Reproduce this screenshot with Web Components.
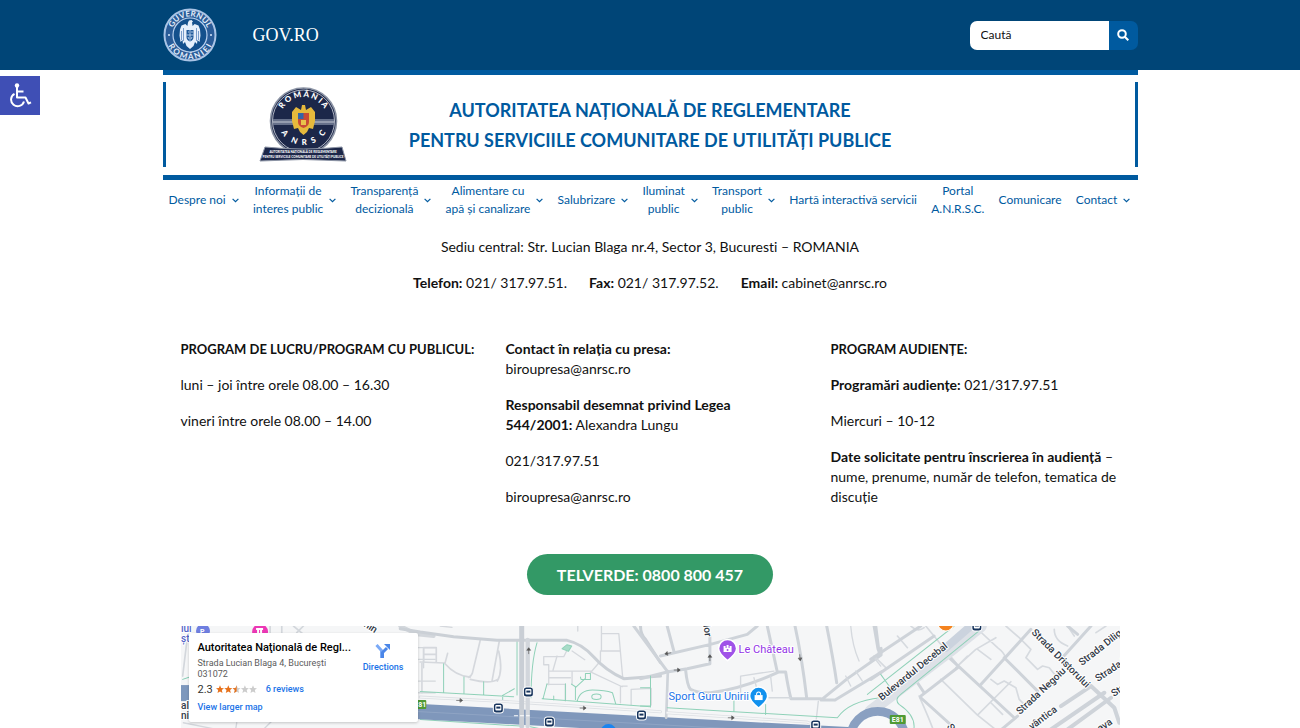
<!DOCTYPE html>
<html lang="ro">
<head>
<meta charset="utf-8">
<title>Contact – ANRSC</title>
<style>
  html, body { margin: 0; }
  body {
    min-height: 100vh; background: #fff; color: #111;
    font: 14px/20px Lato, "Open Sans", sans-serif;
    font-variant-ligatures: none;
    --navy: #004577; --blue: #005a9f;
  }
</style>
</head>
<body>
<anrsc-page></anrsc-page>

<script>
const define = (name, html) => {
  const tpl = document.createElement('template');
  tpl.innerHTML = html;
  customElements.define(name, class extends HTMLElement {
    constructor() {
      super();
      this.attachShadow({ mode: 'open' }).append(tpl.content.cloneNode(true));
    }
  });
};

/* Government seal */
define('gov-seal', `
<style>:host{display:block} svg{display:block;width:54px;height:54px}</style>
<svg viewBox="0 0 54 54" role="img" aria-label="Guvernul României">
  <defs>
    <path id="t" d="M8.500 27a18.500 18.500 0 0 1 37 0"/>
    <path id="b" d="M2.800 27a24.200 24.200 0 0 0 48.400 0"/>
  </defs>
  <circle cx="27" cy="27" r="25.500" fill="#2a5c98" stroke="#a9c4e6" stroke-width="2"/>
  <circle cx="27" cy="27" r="17" fill="#14508c" stroke="#b9d0ee" stroke-width="1.200"/>
  <g fill="#e6effb">
    <path d="M26 12.500l2.500-.5 1.500 1.500-1 1 .6 3.500 2-2 3.900 1.500 1.500 4 .5 6-1 6.500-2-2-.5 4-2-2-1.500 4-3.500 3-3.500-3-1.500-4-2 2-.5-4-2 2-1-6.500.5-6 1.500-4 3.900-1.500 2 2 .6-3.500z"/>
  </g>
  <path d="M20.500 20v13M18.500 23v9M33.500 20v13M35.500 23v9" stroke="#4a7ab5" stroke-width=".7"/>
  <path d="M23.500 22h7v7q0 3-3.500 4.500-3.500-1.500-3.500-4.500z" fill="#1f5a9a"/>
  <path d="M27 22v11M23.500 27h7M25 24h1M28 24h2M25 29l1 2M29 29l-1 2" stroke="#cfe0f6" stroke-width=".8"/>
  <g fill="#e6effb" font-family="Lato, sans-serif" font-size="8" font-weight="700" text-anchor="middle">
    <text><textPath href="#t" startOffset="50%">GUVERNUL</textPath></text>
    <text><textPath href="#b" startOffset="50%">R O M Â N I E I</textPath></text>
  </g>
  <circle cx="6" cy="27" r="1" fill="#d9e7fa"/><circle cx="48" cy="27" r="1" fill="#d9e7fa"/>
</svg>`);

/* ANRSC emblem */
define('anrsc-emblem', `
<style>:host{display:block} svg{display:block;width:88px;height:76px}</style>
<svg viewBox="0 0 88 76" role="img" aria-label="ANRSC">
  <defs>
    <path id="t" d="M20.500 34a24 24 0 0 1 48 0"/>
    <path id="b" d="M18.500 32a26 26 0 0 0 52 0"/>
  </defs>
  <circle cx="44.500" cy="34" r="33" fill="#1c2749" stroke="#8c94a5" stroke-width="1.600"/>
  <circle cx="44.500" cy="34" r="31" fill="none" stroke="#d5d9e2" stroke-width=".8"/>
  <path d="M14 32h61v6H14z" fill="#66708a"/><path d="M14 35h61" stroke="#c3c8d3"/>
  <path d="M43 18l3 0 1 5 5-3 4 5 0 9-2 8-4-1-2 4-3.500 3-3.500-3-2-4-4 1-2-8 0-9 4-5 5 3z" fill="#e6b93c"/>
  <path d="M39 26h11v9q0 4-5.500 6-5.500-2-5.500-6z" fill="#c94a35"/>
  <path d="M39 26h5.500v6H39z" fill="#3565a8"/><path d="M42 33h5v5h-5z" fill="#e9c24b"/>
  <g fill="#fff" font-family="Lato, sans-serif" font-weight="900" text-anchor="middle">
    <text font-size="8"><textPath href="#t" startOffset="50%">R O M Â N I A</textPath></text>
    <text font-size="8"><textPath href="#b" startOffset="50%">A&#160;&#160;&#160; N&#160;&#160; R&#160;&#160; S&#160;&#160;&#160; C</textPath></text>
  </g>
  <path d="M6 60q38 4 77 0l4 14q-43-3-86 0z" fill="#1c2749" stroke="#8c94a5"/>
  <g fill="#fff" font-family="Lato, sans-serif" font-weight="900" text-anchor="middle" font-size="3">
    <text x="44" y="66">AUTORITATEA NAȚIONALĂ DE REGLEMENTARE</text>
    <text x="44" y="71">PENTRU SERVICIILE COMUNITARE DE UTILITĂȚI PUBLICE</text>
  </g>
</svg>`);

/* Top bar with search */
define('top-bar', `
<style>
  :host{display:block;background:var(--navy)}
  .in{width:75%;margin:0 auto;height:70px;display:flex;align-items:center}
  a{margin-left:36px;color:#fff;text-decoration:none;font:18px/24px "Liberation Serif",serif}
  form{margin-left:auto;display:flex;width:168px;height:29px;border-radius:7px;overflow:hidden}
  input{flex:1;min-width:0;border:0;padding:0 11px;background:#fff;font:12px/20px Lato,sans-serif;color:#000}
  input::placeholder{color:#111;opacity:1}
  button{width:29px;border:0;padding:0;background:var(--blue);display:grid;place-items:center}
</style>
<div class="in">
  <gov-seal></gov-seal>
  <a href="#gov">GOV.RO</a>
  <form role="search">
    <input type="search" placeholder="Caută" aria-label="Caută">
    <button type="button" aria-label="Caută"><svg width="12" height="12" viewBox="0 0 12 12" fill="none" stroke="#fff" stroke-width="2"><circle cx="5" cy="5" r="3.800"/><path d="M7.800 7.800L11.300 11.300"/></svg></button>
  </form>
</div>`);

/* Institution banner */
define('site-banner', `
<style>
  :host{display:block;border:solid var(--blue);border-width:5px 0;padding:7px 0 8px}
  .in{display:grid;grid-template-columns:1fr 2fr 1fr;align-items:center;height:85px;box-sizing:border-box;border:solid var(--blue);border-width:0 3px}
  anrsc-emblem{justify-self:center;padding-left:32px}
  h1{margin:0;text-align:center;white-space:nowrap;font:700 18px/30px "Trebuchet MS",Lato,sans-serif;color:var(--blue)}
</style>
<div class="in">
  <anrsc-emblem></anrsc-emblem>
  <h1>AUTORITATEA NAȚIONALĂ DE REGLEMENTARE<br>PENTRU SERVICIILE COMUNITARE DE UTILITĂȚI PUBLICE</h1>
</div>`);

/* Menu entry; "sub" adds the drop-down chevron */
define('menu-item', `
<style>
  :host{display:block}
  a{display:flex;align-items:center;gap:6px;color:var(--blue);text-decoration:none;text-align:center;white-space:nowrap;font:12px/18px Lato,sans-serif}
  svg{display:none}
  :host([sub]) svg{display:block}
</style>
<a href="#menu"><span><slot></slot></span><svg width="7" height="5" viewBox="0 0 7 5" fill="none" stroke="currentColor" stroke-width="1.200"><path d="M.6.8L3.500 3.700 6.400.8"/></svg></a>`);

define('main-menu', `
<style>
  :host{display:block}
  nav{display:flex;justify-content:space-between;align-items:center;height:36px;padding:2px 7px 0 6px}
</style>
<nav aria-label="Meniu principal">
  <menu-item sub>Despre noi</menu-item>
  <menu-item sub>Informații de<br>interes public</menu-item>
  <menu-item sub>Transparență<br>decizională</menu-item>
  <menu-item sub>Alimentare cu<br>apă și canalizare</menu-item>
  <menu-item sub>Salubrizare</menu-item>
  <menu-item sub>Iluminat<br>public</menu-item>
  <menu-item sub>Transport<br>public</menu-item>
  <menu-item>Hartă interactivă servicii</menu-item>
  <menu-item>Portal<br>A.N.R.S.C.</menu-item>
  <menu-item>Comunicare</menu-item>
  <menu-item sub>Contact</menu-item>
</nav>`);

define('contact-info', `
<style>
  :host{display:block}
  p,h2{margin:0 0 16px}
  h2{font:700 13px/20px Lato,sans-serif;white-space:nowrap}
  b{font-weight:700}
  .lead{text-align:center;padding-top:19px}
  .row{display:flex;justify-content:center;gap:22px}
  .cols{display:grid;grid-template-columns:repeat(3,minmax(0,1fr));padding-top:30px}
  .cols>div{padding:0 18px}
  .tel{display:flex;justify-content:center;padding:31px 0}
  .tel a{box-sizing:border-box;width:246px;height:41px;border-radius:21px;background:#339966;color:#fff;text-align:center;text-decoration:none;font:700 16px/41px Lato,sans-serif}
</style>
<div class="lead">
  <p>Sediu central: Str. Lucian Blaga nr.4, Sector 3, Bucuresti – ROMANIA</p>
  <p class="row"><span><b>Telefon:</b> 021/ 317.97.51.</span><span><b>Fax:</b> 021/ 317.97.52.</span><span><b>Email:</b> cabinet@anrsc.ro</span></p>
</div>
<div class="cols">
  <div>
    <h2>PROGRAM DE LUCRU/PROGRAM CU PUBLICUL:</h2>
    <p>luni – joi între orele 08.00 – 16.30</p>
    <p>vineri între orele 08.00 – 14.00</p>
  </div>
  <div>
    <p><b>Contact în relația cu presa:</b><br>biroupresa@anrsc.ro</p>
    <p><b>Responsabil desemnat privind Legea<br>544/2001:</b> Alexandra Lungu</p>
    <p>021/317.97.51</p>
    <p>biroupresa@anrsc.ro</p>
  </div>
  <div>
    <h2>PROGRAM AUDIENȚE:</h2>
    <p><b>Programări audiențe:</b> 021/317.97.51</p>
    <p>Miercuri – 10-12</p>
    <p><b>Date solicitate pentru înscrierea în audiență</b> –<br>nume, prenume, număr de telefon, tematica de<br>discuție</p>
  </div>
</div>
<div class="tel"><a href="tel:0800800457">TELVERDE: 0800 800 457</a></div>`);

define('map-card', `
<style>
  :host{display:flex;justify-content:space-between;box-sizing:border-box;width:229px;height:89px;padding:8px 14px 0 9px;background:#fff;border-radius:2px;box-shadow:0 1px 3px #0003;font:10px/11px Roboto,sans-serif;color:#5b5b5b;white-space:nowrap}
  h2{margin:0 0 3px;font:500 11px/14px Roboto,sans-serif;color:#000}
  .rate{display:flex;align-items:center;margin:2px 0 5px;height:14px;font-size:11px;color:#333}
  .rate svg{margin:0 9px 0 3px}
  a{color:#1a73e8;text-decoration:none;font:500 9px/12px Roboto,sans-serif;display:block}
  .addr{font-size:9px}
  .dir{text-align:center;padding-top:2px}
  .dir svg{display:block;margin:0 auto 2px}
</style>
<div>
  <h2>Autoritatea Naţională de Regl...</h2>
  <div class="addr">Strada Lucian Blaga 4, București<br>031072</div>
  <div class="rate">2.3<svg width="41" height="9" viewBox="0 0 41 9" aria-label="2.3 din 5">
    <defs><path id="s" d="M4 .3l1.100 2.700 2.900.2-2.200 1.900.7 2.800L4 6.400 1.500 7.900l.7-2.800L0 3.200 2.900 3z"/></defs>
    <use href="#s" fill="#e7711b"/><use href="#s" x="8.300" fill="#e7711b"/><use href="#s" x="16.600" fill="#ccc"/><path d="M20.600.3v6.100l-2.500 1.500.7-2.800-2.200-1.900 2.900-.2z" fill="#e7711b"/><use href="#s" x="24.900" fill="#ccc"/><use href="#s" x="33" fill="#ccc"/></svg><a href="#reviews">6 reviews</a></div>
  <a href="#larger">View larger map</a>
</div>
<a class="dir" href="#directions"><svg width="16" height="16" viewBox="0 0 16 16"><path d="M1.500 2l5 5.500V15" fill="none" stroke="#7baaf7" stroke-width="3"/><path d="M7.500 15V9.500L12 5" fill="none" stroke="#4a86e8" stroke-width="3"/><path d="M9 1h6v6z" fill="#4a86e8"/></svg>Directions</a>`);

/* Street map: road geometry is drawn in tiles of 3 units per pixel */
define('street-map', `
<style>
  :host{display:block;position:relative;overflow:hidden;background:#f5f6f7}
  .map{position:absolute;inset:0;width:100%;height:100%}
  map-card{position:absolute;left:8px;top:7px}
  text{font-family:Roboto,sans-serif;paint-order:stroke;stroke:#fff;stroke-width:2px;stroke-linejoin:round}
</style>
<svg class="map" viewBox="0 0 938 102" preserveAspectRatio="xMinYMin slice">
  <defs>
    <g id="bus"><rect x="-5" y="-5" width="10" height="10" rx="3" fill="#17345c" stroke="#fff" stroke-width="1"/><rect x="-3" y="-3" width="6" height="5.500" rx="1" fill="#fff"/><path d="M-2-1.500h4v2h-4z" fill="#17345c"/></g>
    <path id="arr" d="M-9 0h14M2-5l7 5-7 5z" stroke="#555" stroke-width="2" fill="#555"/>
  </defs>
  <g transform="scale(.333333)" fill="none" stroke-linecap="round" stroke-linejoin="round">
    <!-- west edge -->
    <g transform="translate(-33 -30)" stroke="#d3d7dc" stroke-width="5">
      <path d="M50 80L38 180M60 30L50 80M370 30l30 25M400 30l-20 20M300 30v30M335 30v30"/>
      <path d="M38 190l30-10" stroke="#7fcbb0" stroke-width="3"/>
      <path d="M20 207h60v48H20z" fill="#7e98bd" stroke="none"/>
      <path d="M690 30l50 25 50 5" stroke-width="12"/>
      <path d="M745 95h50M745 130h50M760 95v60M745 195h50M745 230h50" stroke-width="4"/>
      <path d="M200 320l-5 30M310 310l-30 30M40 320l100 20" stroke-width="4"/>
    </g>
    <!-- centre-west -->
    <g transform="translate(717 -30)">
      <g stroke="#d5d8dd" stroke-width="5">
        <path d="M0 138l72 3q35 40 78 42M180 72l-24 100q-4 10-12 12M237 75l-22 120M235 105q14 60-4 90M150 190q60 15 82 0M10 138v-43h38v43M10 115h38M82 112l-8 30M5 140v90"/>
        <path d="M543 30v75M543 53h52l12 135M543 105h55M540 105v30l-30 35M472 30v15M60 30l35 4M370 122h60l15-30M370 122v24h15v60M385 165h130M385 185h65M410 120l-12 42M455 165v40M380 205h55v50M515 170l90 42M605 210h15M600 210v50M632 265v-45l60-3v50M455 105l38 26" stroke-width="4"/>
      </g>
      <g stroke="#8fd1b8" stroke-width="3">
        <path d="M0 226l280 16M70 143v86M131 183v48M190 197v39M290 75v162M282 218l-35 20v15M350 80q-18 60-18 165M365 248l325 24M380 203l-12 45M435 203v50M465 250v-38l-12-8M465 215l30-28v-15h15v18h-28l-2-7M470 256q8-34 46-34t60 8l10 34M690 217v56M0 310l300 20M330 332l100 20M400 240v12"/>
        <ellipse cx="528" cy="242" rx="14" ry="8"/><path d="M425 98l15-12 14 4-10 16z" fill="#a8dcc8"/>
      </g>
      <g stroke="#cbd0d6" stroke-width="9"><path d="M-60 38l60 10 100 14 130 11h210q45 10 80 50t90 65l110-8"/><path d="M660 30q0 25 15 40l45 70"/></g>
      <path d="M0 243l300 16 420 28" stroke="#dde0e4" stroke-width="9"/><path d="M0 243l300 16 420 28" stroke="#f5f6f7" stroke-width="4"/>
    </g>
    <!-- boulevard, west to east -->
    <path d="M650 250L1020 270 1600 302 2100 328" stroke="#7f97bb" stroke-width="46" transform="translate(0 3)"/>
    <path d="M650 250L1020 270 1600 302 2100 328" stroke="#8fa4c4" stroke-width="3" transform="translate(0 3)"/>
    <g transform="translate(717 -30)">
      <path d="M304 30v300" stroke="#c9ced5" stroke-width="15"/><path d="M322 72v258" stroke="#d2d6dc" stroke-width="13"/>
      <path d="M282 299h45" stroke="#fff" stroke-width="3" stroke-dasharray="10 8"/>
      <use href="#arr" transform="translate(325 104) rotate(-90)"/><use href="#arr" transform="translate(118 253)"/><use href="#arr" transform="translate(488 276)"/>
    </g>
    <!-- centre-east -->
    <g transform="translate(1377 -30)">
      <g stroke="#ced3d9" stroke-width="9">
        <path d="M-20 30l100 135M80 30l20 75M60 120l150-35 110-30 30-25M0 188l80-20 60-10 68-15V60M135 160q5 50 15 60 25 12 60 10 90-10 200-60M380 30l30 138h25q8 50 16 80h50M463 30q20 90 35 215M501 248h40M558 30q20 100 30 170M583 252h-42l80-65 100-70v-20M583 252l140-85M700 30l12 70"/>
        <path d="M82 165l-5 140" stroke-width="8"/>
      </g>
      <g stroke="#d5d9de" stroke-width="4"><path d="M300 230v-50l100-15M385 245h65M340 185l8 30M390 180l5 45M533 255l-8 70M615 180l15 30M645 165l20 30M700 125l20 25M630 30q5 60 25 105"/></g>
      <g stroke="#8fd1b8" stroke-width="3"><path d="M80 275l510 30q35-50 130-60M30 180v90M0 215h30M280 245v40M375 265v30M0 270h30"/></g>
      <path d="M80 290l420 28 30 12" stroke="#dde0e4" stroke-width="9"/><path d="M80 290l420 28 30 12" stroke="#f5f6f7" stroke-width="4"/>
      <use href="#arr" transform="translate(82 112) rotate(170)"/><use href="#arr" transform="translate(110 162)"/><use href="#arr" transform="translate(208 125) rotate(-90)"/><use href="#arr" transform="translate(478 125) rotate(85)"/><use href="#arr" transform="translate(272 305)"/>
    </g>
    <!-- east -->
    <g transform="translate(2067 -30)">
      <g stroke="#d6dadf" stroke-width="5">
        <path d="M10 120l35 35M80 60l30 35M120 30q20 20 40 5M165 30l90 110M310 30l70 65q20 15 24 30M320 100l40 30M405 30l40 35 35 35-15 25 35 35 15-10 20 5 20 25M210 190l110 107 100-100M320 297l50 40M360 260l35 35M360 190l20 15 20-10 35 20 10 35 20 20M145 240q40 90 45 110M255 155l60-55 60-35M290 120l-30 30M550 40q0 35 40 50M590 30l20 30M675 50l30-20"/>
      </g>
      <g stroke="#ced3d9" stroke-width="9">
        <path d="M0 130L150 30M0 190L190 60M230 120l200 185M150 240l110-85M480 40L330 205M400 125l100 100M150 245l100 90M140 200l20 30M440 300l-60 50M660 30l-90 100M590 30l30 25M15 30l10 80"/>
        <path d="M660 210l70 65 15 45M570 270l90-60M590 340l130-95M540 340l160-110" stroke-width="12"/>
      </g>
      <path d="M0 285L250 95 330 30" stroke="#dde1e7" stroke-width="36"/>
      <path d="M225 95l75-65" stroke="#cbd3de" stroke-width="24"/>
      <path d="M-10 235L250 30M90 235L330 40M90 235q-20 15-5 30 60 40 40 90M30 175l25 35" stroke="#8fd1b8" stroke-width="3"/>
    </g>
    <circle cx="2088" cy="338" r="82" stroke="#8aa0c1" stroke-width="26" fill="#f8f9fa"/>
  </g>
  <use href="#bus" x="347" y="66"/><use href="#bus" x="317" y="82"/><use href="#bus" x="368" y="96"/><use href="#bus" x="460" y="89"/><use href="#bus" x="634" y="99"/><use href="#bus" x="795" y="0"/>
  <circle cx="22" cy="5" r="7" fill="#6f7fe0"/><circle cx="79" cy="6" r="8" fill="#ec38b5"/>
  <path d="M75 3h7M77 3v4M80 3v4" stroke="#fff" stroke-width="2"/>
  <circle cx="427" cy="106" r="8" fill="#1a84f0"/><circle cx="764" cy="-3" r="8" fill="#f4831f" stroke="#fff"/>
  <g stroke="#fff" stroke-width="1.500">
    <path d="M546 13.500a9 9 0 0 1 9 9q0 5-9 12-9-7-9-12a9 9 0 0 1 9-9z" fill="#a052e8"/>
    <path d="M577 61a9 9 0 0 1 9 9q0 5-9 12-9-7-9-12a9 9 0 0 1 9-9z" fill="#1191ee"/>
  </g>
  <path d="M542 26v-6h2v2h1v-3h2v3h1v-2h2v6z" fill="#fff"/><circle cx="546" cy="24" r="1" fill="#a052e8"/>
  <path d="M573 69h8v5h-8z" fill="#fff"/><path d="M575 69v-1a2 2 0 0 1 4 0v1" fill="none" stroke="#fff"/>
  <rect x="708" y="89" width="16" height="9" rx="1" fill="#4f9a35"/><rect x="234" y="74" width="11" height="9" rx="1" fill="#4f9a35"/>
  <g fill="#fff" font-size="7" font-weight="700"><text x="710" y="96" style="stroke:none">E81</text><text x="237" y="81" style="stroke:none">81</text><text x="19" y="8" style="stroke:none">P</text></g>
  <text x="557" y="27" font-size="11" fill="#9334e6">Le Château</text>
  <text x="487" y="74" font-size="11" fill="#1a73e8">Sport Guru Unirii</text>
  <g font-size="10" font-weight="500" fill="#333b48">
    <text transform="translate(700 75) rotate(-39)">Bulevardul Decebal</text>
    <text transform="translate(849 7) rotate(45)">Strada Dristorului</text>
    <text transform="translate(838 89) rotate(-43)">Strada Negoiu</text>
    <text transform="translate(900 40) rotate(-38)">Strada Dilig</text>
    <text transform="translate(916 56) rotate(-34)">Strada T</text>
    <text transform="translate(932 71) rotate(-34)">Str</text>
    <text transform="translate(850 104) rotate(-37)">vântica</text>
    <text transform="translate(918 106) rotate(-34)">ava</text>
    <text transform="translate(521 -6) rotate(82)">elor</text>
    <text transform="translate(182 0) rotate(32)">nin</text>
    <text transform="translate(774 102) rotate(-120)">S</text>
    <text x="0" y="6" fill="#5465c8">iul</text><text x="0" y="16" fill="#5465c8">ști</text>
    <text x="0" y="83">al</text><text x="0" y="93">nic</text>
  </g>
</svg>
<map-card></map-card>`);

define('access-button', `
<style>
  :host{position:absolute;left:0;top:76px}
  button{display:grid;place-items:center;width:40px;height:39px;border:0;padding:0;background:#3f4fb5}
</style>
<button type="button" aria-label="Accesibilitate"><svg width="24" height="25" viewBox="0 0 24 25" fill="none" stroke="#fff" stroke-width="2" stroke-linejoin="round"><circle cx="9" cy="2.500" r="2.200" fill="#fff" stroke="none"/><path d="M9 4v10.500h8.500l3 6 2.500-1.200M9 8.500h6.500"/><path d="M6.500 10.800a6.600 6.600 0 1 0 9.500 7.700"/></svg></button>`);

define('anrsc-page', `
<style>
  :host{display:flex;flex-direction:column;min-height:100vh;position:relative}
  main{width:75%;margin:0 auto;flex:1;display:flex;flex-direction:column}
  street-map{flex:1;min-height:102px;margin:0 18px}
</style>
<top-bar></top-bar>
<main>
  <site-banner></site-banner>
  <main-menu></main-menu>
  <contact-info></contact-info>
  <street-map></street-map>
</main>
<access-button></access-button>`);
</script>
</body>
</html>
